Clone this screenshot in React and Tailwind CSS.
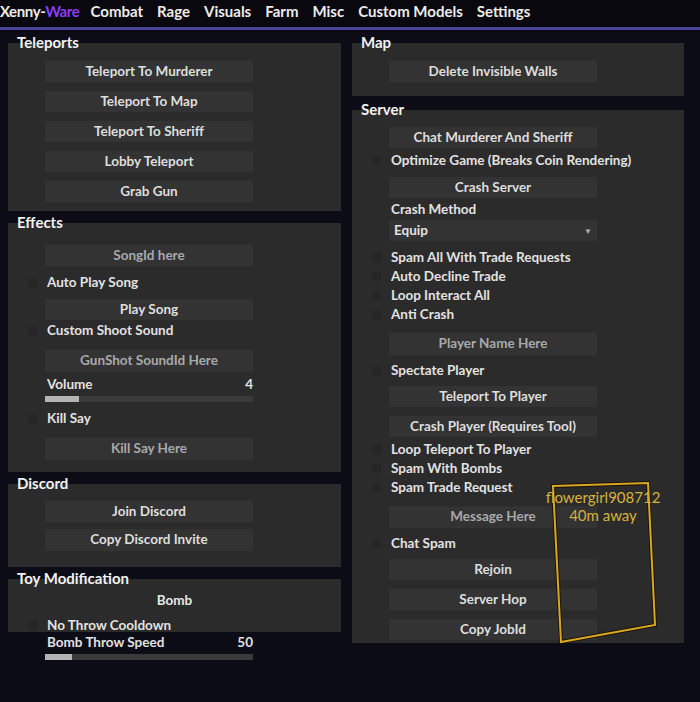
import React from 'react';

const font = { fontFamily: 'Lato, "Open Sans", "Liberation Sans", sans-serif' };

const tabs = ['Combat', 'Rage', 'Visuals', 'Farm', 'Misc', 'Custom Models', 'Settings'];

// small building blocks
const Button = ({ label, className = '', muted }) => (
  <div
    className={`ml-[37px] w-[208px] h-[21px] bg-[#333333] flex items-center justify-center text-[13.5px] font-bold leading-none ${
      muted ? 'text-[#a9a9a9]' : 'text-[#dedede]'
    } ${className}`}
  >
    {label}
  </div>
);

const Toggle = ({ label, className = '' }) => (
  <div className={`h-[19px] flex items-center text-[13.5px] font-bold text-[#e2e2e2] ${className}`}>
    <div className="ml-[20px] w-[9px] h-[9px] bg-[#262626] rounded-[2px]" />
    <span className="ml-[10px] leading-none">{label}</span>
  </div>
);

const Slider = ({ label, value, fill, className = '' }) => (
  <div className={`ml-[37px] w-[208px] ${className}`}>
    <div className="h-[18px] flex items-center justify-between text-[13.5px] font-bold text-[#e2e2e2] leading-none">
      <span className="ml-[2px]">{label}</span>
      <span>{value}</span>
    </div>
    <div className="mt-[2px] h-[6px] bg-[#3a3a3a] flex">
      <div className="h-full bg-[#b4b4b4]" style={{ width: fill }} />
    </div>
  </div>
);

const Section = ({ title, height, className = '', children }) => (
  <div className={className}>
    <div className="relative z-10 h-[14px] pl-[9px] text-[15px] font-bold text-[#f2f2f2] leading-[14px]">
      {title}
    </div>
    <div className="-mt-[6px] bg-[#2b2b2b]" style={{ height }}>
      {children}
    </div>
  </div>
);

export default function App() {
  return (
    <div className="relative w-[700px] h-[702px] overflow-hidden bg-[#0b0c16]" style={font}>
      {/* tab bar */}
      <div className="h-[27px] bg-[#08080e] flex items-start pt-[4px] text-[15px] font-bold text-[#ececec] leading-[15px]">
        <span className="tracking-tight">
          Xenny-<span className="text-[#8b3df2]">Ware</span>
        </span>
        <div className="flex gap-[14px] ml-[11px]">
          {tabs.map((t) => (
            <span key={t}>{t}</span>
          ))}
        </div>
      </div>
      <div className="h-[3px] bg-[#4c4394]" />

      <div className="flex gap-[11px] pl-[8px]">
        {/* left column */}
        <div className="w-[333px]">
          <Section title="Teleports" height={168} className="mt-[5px]">
            <div className="pt-[18px] flex flex-col gap-[9px]">
              <Button label="Teleport To Murderer" />
              <Button label="Teleport To Map" />
              <Button label="Teleport To Sheriff" />
              <Button label="Lobby Teleport" />
              <Button label="Grab Gun" />
            </div>
          </Section>

          <Section title="Effects" height={249} className="mt-[4px]">
            <div className="pt-[22px]">
              <Button label="SongId here" muted />
              <Toggle label="Auto Play Song" className="mt-[7px]" />
              <Button label="Play Song" className="mt-[7px] h-[20px]" />
              <Toggle label="Custom Shoot Sound" className="mt-[1px]" />
              <Button label="GunShot SoundId Here" muted className="mt-[10px] h-[22px]" />
              <Slider label="Volume" value="4" fill={34} className="mt-[4px]" />
              <Toggle label="Kill Say" className="mt-[7px]" />
              <Button label="Kill Say Here" muted className="mt-[10px] h-[22px]" />
            </div>
          </Section>

          <Section title="Discord" height={83} className="mt-[4px]">
            <div className="pt-[17px]">
              <Button label="Join Discord" />
              <Button label="Copy Discord Invite" className="mt-[7px] h-[22px]" />
            </div>
          </Section>

          <Section title="Toy Modification" height={53} className="mt-[4px]">
            <div className="pt-[13px]">
              <div className="h-[18px] flex items-center justify-center text-[13.5px] font-bold text-[#e6e6e6] leading-none">
                Bomb
              </div>
              <Toggle label="No Throw Cooldown" className="mt-[6px]" />
              <Slider label="Bomb Throw Speed" value="50" fill={27} className="-mt-[1px]" />
            </div>
          </Section>
        </div>

        {/* right column */}
        <div className="w-[332px]">
          <Section title="Map" height={53} className="mt-[5px]">
            <div className="pt-[18px]">
              <Button label="Delete Invisible Walls" />
            </div>
          </Section>

          <Section title="Server" height={533} className="mt-[6px]">
            <div className="pt-[17px]">
              <Button label="Chat Murderer And Sheriff" />
              <Toggle label="Optimize Game (Breaks Coin Rendering)" className="mt-[3px]" />
              <Button label="Crash Server" className="mt-[7px]" />
              <div className="h-[19px] mt-[2px] ml-[39px] flex items-center text-[13.5px] font-bold text-[#e2e2e2] leading-none">
                Crash Method
              </div>
              <div className="ml-[37px] w-[208px] h-[21px] mt-[1px] bg-[#333333] flex items-center justify-between px-[5px] text-[13.5px] font-bold text-[#e2e2e2] leading-none">
                <span>Equip</span>
                <span className="text-[8px] text-[#b0b0b0]">▼</span>
              </div>
              <Toggle label="Spam All With Trade Requests" className="mt-[7px]" />
              <Toggle label="Auto Decline Trade" />
              <Toggle label="Loop Interact All" />
              <Toggle label="Anti Crash" />
              <Button label="Player Name Here" muted className="mt-[9px] h-[22px]" />
              <Toggle label="Spectate Player" className="mt-[6px]" />
              <Button label="Teleport To Player" className="mt-[6px]" />
              <Button label="Crash Player (Requires Tool)" className="mt-[9px]" />
              <Toggle label="Loop Teleport To Player" className="mt-[3px]" />
              <Toggle label="Spam With Bombs" />
              <Toggle label="Spam Trade Request" />
              <Button label="Message Here" muted className="mt-[9px] h-[22px]" />
              <Toggle label="Chat Spam" className="mt-[6px]" />
              <Button label="Rejoin" className="mt-[6px]" />
              <Button label="Server Hop" className="mt-[9px]" />
              <Button label="Copy JobId" className="mt-[9px]" />
            </div>
          </Section>
        </div>
      </div>

      {/* ESP box drawn over the menu */}
      <svg className="absolute left-0 top-0 pointer-events-none" width="700" height="702">
        <polygon
          points="553,486 648,483 655,625 561,642"
          fill="none"
          stroke="#1a1408"
          strokeWidth="4"
        />
        <polygon
          points="553,486 648,483 655,625 561,642"
          fill="none"
          stroke="#d9a823"
          strokeWidth="2"
        />
      </svg>
      <div className="absolute left-[533px] top-[488px] w-[140px] text-center text-[15px] leading-[18px] text-[#d8b13c]">
        <div>flowergirl908712</div>
        <div>40m away</div>
      </div>
    </div>
  );
}
